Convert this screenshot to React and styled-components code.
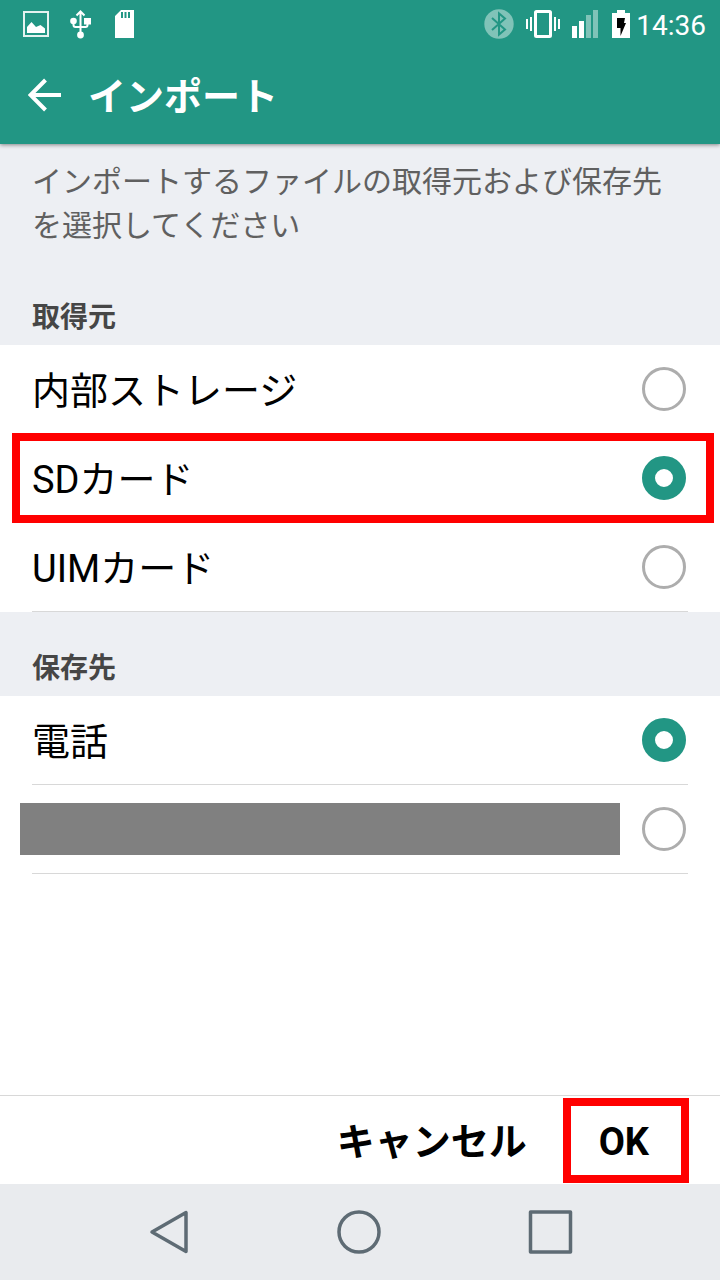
import React from 'react';
import { useState } from 'react';
import styled, { createGlobalStyle, css } from 'styled-components';

const GlobalStyle = createGlobalStyle`
    * {
        box-sizing: border-box;
    }
    body {
        margin: 0;
        background: #fff;
        color: #000;
        font-family: Roboto, "Noto Sans CJK JP", sans-serif;
    }
    button, input {
        font-family: inherit;
    }
`;

const Screen = styled.div`
    display: flex;
    flex-direction: column;
    min-height: 100vh;
`;

const TopArea = styled.header`
    position: relative;
    background: #229684;
    color: #fff;
    box-shadow: 0 1px 4px rgba(0, 0, 0, 0.45);
`;

const StatusBar = styled.div`
    display: flex;
    justify-content: space-between;
    align-items: center;
    height: 48px;
    padding: 0 14px 0 22px;
`;

const StatusGroup = styled.div`
    display: flex;
    align-items: center;
    gap: ${props => props.$gap}px;
`;

const Clock = styled.span`
    margin-left: -6px;
    padding-top: 4px;
    font-size: 28px;
    line-height: 44px;
`;

const AppBar = styled.div`
    display: flex;
    align-items: center;
    height: 96px;
    padding: 0 28px 2px;
    gap: 26px;
`;

const IconButton = styled.button`
    display: flex;
    padding: 0;
    border: 0;
    background: none;
    color: inherit;
    cursor: pointer;
`;

const Title = styled.h1`
    margin: 0;
    padding-top: 4px;
    font-size: 38px;
    line-height: 56px;
    font-weight: 700;
`;

const Main = styled.main`
    flex: 1;
`;

const Intro = styled.p`
    margin: 0;
    padding: 16px 32px 40px;
    background: #edeff3;
    color: #606060;
    font-size: 30px;
    line-height: 44px;
`;

const Group = styled.fieldset`
    min-width: 0;
    margin: 0;
    padding: 0;
    border: 0;
`;

const GroupTitle = styled.legend`
    display: block;
    width: 100%;
    padding: ${props => props.$first ? 8 : 35}px 32px 5px;
    background: #edeff3;
    color: #464646;
    font-size: 28px;
    line-height: 44px;
    font-weight: 700;
`;

// red frame around the part that has to be tapped
const frame = css`
    &::after {
        content: "";
        position: absolute;
        inset: ${props => props.$frame};
        border: 8px solid #f00;
        pointer-events: none;
    }
`;

const Row = styled.label`
    display: block;
    position: relative;
    padding: 0 32px;
    cursor: pointer;
    ${props => props.$frame && frame}
`;

const RowInner = styled.span`
    display: flex;
    align-items: center;
    justify-content: space-between;
    height: 89px;
    padding-right: 2px;
    border-bottom: 1px solid #d8d8d8;
`;

const RowText = styled.span`
    padding-top: 4px;
    font-size: 38px;
    line-height: 56px;
`;

const MaskedText = styled.span`
    flex: 1;
    height: 52px;
    margin: 0 22px 0 -12px;
    background: #808080;
`;

const Radio = styled.input`
    appearance: none;
    flex: none;
    width: 44px;
    height: 44px;
    margin: 0;
    border: 3px solid #adadad;
    border-radius: 50%;
    background: #fff;
    cursor: pointer;
    &:checked {
        border: 13px solid #229684;
    }
`;

const Actions = styled.footer`
    display: flex;
    justify-content: flex-end;
    padding-right: 31px;
    border-top: 1px solid #d8d8d8;
`;

const Action = styled.button`
    position: relative;
    height: 88px;
    padding: 4px ${props => props.$frame ? 40 : 36}px 0 36px;
    border: 0;
    background: none;
    color: #000;
    font-size: 38px;
    line-height: 56px;
    font-weight: 700;
    cursor: pointer;
    ${props => props.$frame && frame}
`;

const NavBar = styled.nav`
    display: grid;
    grid-template-columns: repeat(3, 191px);
    justify-content: center;
    justify-items: center;
    align-items: center;
    height: 96px;
    background: #e9ebee;
    color: #5e6b74;
`;

const PictureIcon = () => (
    <svg width="28" height="28" viewBox="0 0 28 28">
        <rect x="2" y="2" width="24" height="24" fill="none" stroke="#e4f3f0" strokeWidth="2" />
        <path d="M5 23V17L9.500 12L14 17L18.500 15L23 18.500V23Z" fill="#fff" />
    </svg>
);

const UsbIcon = () => (
    <svg width="25" height="30" viewBox="0 0 25 30">
        <path d="M10.500 25V3M6.500 6.500L10.500 2.500L14.500 6.500M3.500 12V16Q3.500 18 5.500 18H15.500Q17.500 18 17.500 16V12" fill="none" stroke="#fff" strokeWidth="2" />
        <circle cx="3.500" cy="12" r="3.300" fill="#fff" />
        <rect x="14" y="9" width="7" height="6.500" fill="#fff" />
        <circle cx="10.500" cy="26" r="3.400" fill="#fff" />
    </svg>
);

const SdIcon = () => (
    <svg width="20" height="28" viewBox="0 0 20 28">
        <path fillRule="evenodd" d="M6 0H19V28H0V6ZM6 2V8H8V2ZM9.500 2V8H11.500V2ZM13 2V8H15V2Z" fill="#fff" />
    </svg>
);

const BluetoothIcon = () => (
    <svg width="30" height="30" viewBox="0 0 30 30">
        <circle cx="15" cy="15" r="14.700" fill="#80c3b8" />
        <path d="M8 9L21 20.500L15 25.500V4.500L21 9.500L8 21" fill="none" stroke="#229684" strokeWidth="2" />
    </svg>
);

const VibrateIcon = () => (
    <svg width="34" height="28" viewBox="0 0 34 28">
        <rect x="9.500" y="1.500" width="15" height="25" rx="1" fill="none" stroke="#fff" strokeWidth="3" />
        <path d="M1 9V19M5 7V21M29 7V21M33 9V19" stroke="#fff" strokeWidth="2" />
    </svg>
);

const SignalIcon = () => (
    <svg width="28" height="28" viewBox="0 0 28 28">
        <path d="M0 16H5V28H0ZM7 11H12V28H7Z" fill="#fff" />
        <path d="M14 5H19V28H14ZM21 0H26V28H21Z" fill="#80c3b8" />
    </svg>
);

const BatteryIcon = () => (
    <svg width="18" height="28" viewBox="0 0 18 28">
        <path d="M5 0H13V3H18V28H0V3H5Z" fill="#fff" />
        <path d="M5 8H13L12 13H14L8.500 26V18H5Z" fill="#000" />
    </svg>
);

const BackArrow = () => (
    <svg width="34" height="34" viewBox="0 0 34 34">
        <path d="M33 17H2M17.500 2L2.500 17L17.500 32" fill="none" stroke="#fff" strokeWidth="4" />
    </svg>
);

const NavIcon = ({ children }) => (
    <svg width="46" height="46" viewBox="0 0 46 46" fill="none" stroke="currentColor" strokeWidth="3.500" strokeLinejoin="round">
        {children}
    </svg>
);

const sources = [
    { id: 'internal', name: '内部ストレージ' },
    { id: 'sd', name: 'SDカード', frame: '-1px 6px 0 12px' },
    { id: 'uim', name: 'UIMカード' },
];

const targets = [
    { id: 'phone', name: '電話' },
    { id: 'account' },
];

const Choices = ({ title, name, items, first }) => {
    const [selected, select] = useState(name === 'source' ? 'sd' : 'phone');
    return (
        <Group>
            <GroupTitle $first={first}>{title}</GroupTitle>
            {items.map(item => (
                <Row key={item.id} $frame={item.frame}>
                    <RowInner>
                        {item.name ? <RowText>{item.name}</RowText> : <MaskedText />}
                        <Radio
                            type="radio"
                            name={name}
                            value={item.id}
                            aria-label={item.name ? undefined : 'アカウント'}
                            checked={selected === item.id}
                            onChange={() => select(item.id)}
                        />
                    </RowInner>
                </Row>
            ))}
        </Group>
    );
};

const App = () => {
    return (
        <Screen>
            <GlobalStyle />
            <TopArea>
                <StatusBar>
                    <StatusGroup $gap={20}>
                        <PictureIcon />
                        <UsbIcon />
                        <SdIcon />
                    </StatusGroup>
                    <StatusGroup $gap={12}>
                        <BluetoothIcon />
                        <VibrateIcon />
                        <SignalIcon />
                        <BatteryIcon />
                        <Clock>14:36</Clock>
                    </StatusGroup>
                </StatusBar>
                <AppBar>
                    <IconButton aria-label="戻る"><BackArrow /></IconButton>
                    <Title>インポート</Title>
                </AppBar>
            </TopArea>
            <Main>
                <Intro>インポートするファイルの取得元および保存先を選択してください</Intro>
                <Choices title="取得元" name="source" items={sources} first />
                <Choices title="保存先" name="target" items={targets} />
            </Main>
            <Actions>
                <Action>キャンセル</Action>
                <Action $frame="2px 0 1px 0">OK</Action>
            </Actions>
            <NavBar>
                <IconButton aria-label="前の画面"><NavIcon><path d="M6 23L40 3.500V42.500Z" /></NavIcon></IconButton>
                <IconButton aria-label="ホーム"><NavIcon><circle cx="22" cy="23" r="20" /></NavIcon></IconButton>
                <IconButton aria-label="履歴"><NavIcon><path d="M2.500 3H42.500V43H2.500Z" /></NavIcon></IconButton>
            </NavBar>
        </Screen>
    );
};

export default App
